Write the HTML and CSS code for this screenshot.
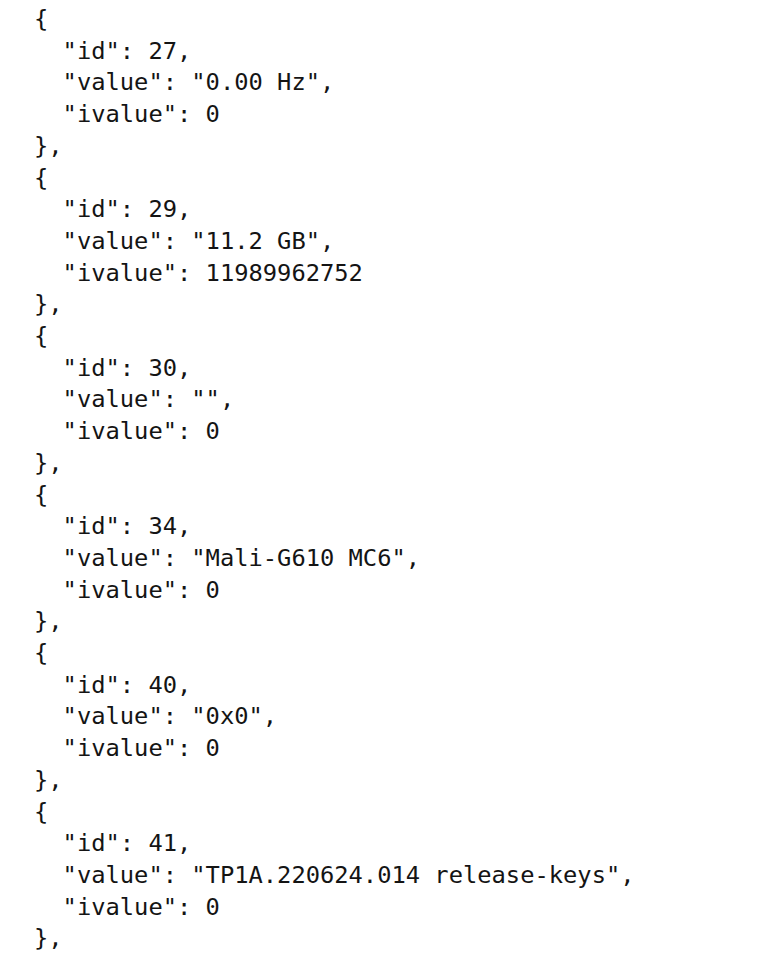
FILE: index.html
```html
<!DOCTYPE html>
<html lang="en">
<head>
<meta charset="utf-8">
<title>JSON</title>
<link rel="stylesheet" href="styles.css">
</head>
<body>
<pre class="json">{
  "id": 27,
  "value": "0.00 Hz",
  "ivalue": 0
},
{
  "id": 29,
  "value": "11.2 GB",
  "ivalue": 11989962752
},
{
  "id": 30,
  "value": "",
  "ivalue": 0
},
{
  "id": 34,
  "value": "Mali-G610 MC6",
  "ivalue": 0
},
{
  "id": 40,
  "value": "0x0",
  "ivalue": 0
},
{
  "id": 41,
  "value": "TP1A.220624.014 release-keys",
  "ivalue": 0
},</pre>
</body>
</html>
```
FILE: styles.css
```css
html, body {
  margin: 0;
  padding: 0;
  background: #ffffff;
}
body {
  width: 758px;
  height: 960px;
  overflow: hidden;
}
.json {
  margin: 0;
  padding: 4px 0 0 34px;
  font-family: "DejaVu Sans Mono", "Liberation Mono", monospace;
  font-size: 23.75px;
  line-height: 31.7px;
  color: #141414;
}
```
